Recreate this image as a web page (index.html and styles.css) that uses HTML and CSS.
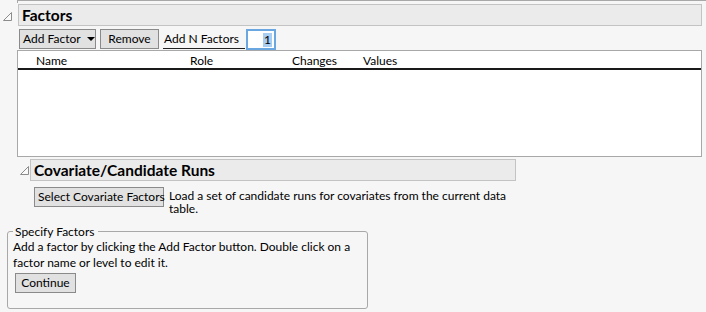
FILE: index.html
```html
<!DOCTYPE html>
<html>
<head>
<meta charset="utf-8">
<link rel="stylesheet" href="styles.css">
</head>
<body>
<div class="topline"></div>

<section class="outline outline-factors">
  <div class="disclosure">
    <svg width="10" height="9" viewBox="0 0 10 9"><path d="M0.5 8.5 L8.5 0.5 L8.5 8.5 Z" fill="#fafafa" stroke="#8c8c8c" stroke-width="1"/></svg>
  </div>
  <div class="outline-body">
    <div class="outline-header">Factors</div>
    <div class="toolbar">
      <button class="btn btn-menu">Add Factor <span class="caret"></span></button>
      <button class="btn">Remove</button>
      <span class="nlabel">Add N Factors</span>
      <span class="ninput"><span class="sel">1</span></span>
    </div>
    <div class="table">
      <div class="thead">
        <span class="col col-name">Name</span>
        <span class="col col-role">Role</span>
        <span class="col col-changes">Changes</span>
        <span class="col col-values">Values</span>
      </div>
    </div>
  </div>
</section>

<section class="outline outline-cov">
  <div class="disclosure">
    <svg width="10" height="9" viewBox="0 0 10 9"><path d="M0.5 8.5 L8.5 0.5 L8.5 8.5 Z" fill="#fafafa" stroke="#8c8c8c" stroke-width="1"/></svg>
  </div>
  <div class="outline-body">
    <div class="outline-header">Covariate/Candidate Runs</div>
    <div class="cov-row">
      <button class="btn">Select Covariate Factors</button>
      <p class="cov-text">Load a set of candidate runs for covariates from the current data table.</p>
    </div>
  </div>
</section>

<fieldset class="group">
  <legend>Specify Factors</legend>
  <p class="group-text">Add a factor by clicking the Add Factor button. Double click on a factor name or level to edit it.</p>
  <button class="btn">Continue</button>
</fieldset>
</body>
</html>
```

FILE: styles.css
```css
html, body {
  margin: 0;
  padding: 0;
  background: #f6f6f6;
}
body {
  font-family: Lato, "Liberation Sans", sans-serif;
  font-size: 12px;
  color: #000;
  width: 706px;
  height: 312px;
  overflow: hidden;
}
.topline {
  height: 2px;
  margin-left: 17px;
  border-top: 1px solid #a8a8a8;
  border-left: 1px solid #a8a8a8;
}
.outline {
  display: flex;
  align-items: flex-start;
}
.disclosure {
  display: flex;
  padding-top: 8px;
}
.outline-factors {
  margin-top: 1px;
}
.outline-factors .disclosure {
  width: 18px;
  box-sizing: border-box;
  justify-content: flex-start;
  padding-left: 3px;
}
.outline-factors .outline-body {
  width: 684px;
}
.outline-header {
  height: 20px;
  background: #ebebeb;
  border: 1px solid #c3c3c3;
  font-weight: bold;
  font-size: 15.5px;
  line-height: 20px;
  padding-left: 3px;
  white-space: nowrap;
}
.toolbar {
  display: flex;
  align-items: flex-start;
  margin-top: 3px;
  margin-left: 1px;
  height: 20px;
}
.btn {
  font-family: inherit;
  font-size: 12px;
  font-weight: normal;
  white-space: nowrap;
  height: 20px;
  line-height: 16px;
  padding: 0 5px;
  background: #e1e1e1;
  border: 1px solid #8a8a8a;
  border-radius: 0;
  color: #000;
  margin: 0;
}
.btn-menu {
  display: flex;
  align-items: center;
  gap: 6px;
  width: 77px;
  padding: 0 3px;
}
.caret {
  width: 0;
  height: 0;
  border-left: 4px solid transparent;
  border-right: 4px solid transparent;
  border-top: 4px solid #000;
}
.toolbar .btn + .btn {
  margin-left: 4px;
  width: 59px;
}
.nlabel {
  margin-left: 4px;
  width: 82px;
  height: 20px;
  line-height: 19px;
  border-bottom: 1px solid #222;
  box-sizing: border-box;
  padding-left: 1px;
  white-space: nowrap;
}
.ninput {
  margin-left: 1px;
  width: 30px;
  height: 21px;
  box-sizing: border-box;
  border: 2px solid #6aa6df;
  background: #fff;
  display: flex;
  justify-content: flex-end;
  align-items: center;
  padding-right: 2px;
}
.sel {
  background: #a8cdf0;
  padding: 0 1px;
  line-height: 14px;
}
.table {
  margin-top: 1px;
  margin-left: -1px;
  height: 105px;
  background: #fff;
  border: 1px solid #a8a8a8;
}
.thead {
  position: relative;
  height: 17px;
  border-bottom: 2px solid #1a1a1a;
  line-height: 19px;
}
.col {
  position: absolute;
  top: 0;
}
.col-name { left: 18px; }
.col-role { left: 172px; }
.col-changes { left: 274px; }
.col-values { left: 345px; }

.outline-cov {
  margin-top: 2px;
  margin-left: 17px;
}
.outline-cov .disclosure {
  width: 13px;
  justify-content: flex-start;
  padding-left: 3px;
  box-sizing: border-box;
  padding-top: 7px;
}
.outline-cov .outline-body {
  width: 486px;
}
.cov-row {
  display: flex;
  align-items: flex-start;
  margin-top: 6px;
  margin-left: 4px;
  width: 480px;
}
.cov-row .btn {
  flex: none;
  width: 130px;
  padding: 0 3px;
}
.cov-text {
  margin: 2px 0 0 5px;
  line-height: 13px;
  width: 340px;
}
.group {
  margin: 10px 0 0 7px;
  padding: 0 5px 10px 5px;
  width: 361px;
  height: 84px;
  box-sizing: border-box;
  border: 1px solid #a8a8a8;
  border-radius: 3px;
}
.group legend {
  padding: 0 4px 0 2px;
  margin-left: 0;
  line-height: 13px;
}
.group-text {
  margin: 1px 0 0 0;
  line-height: 16px;
}
.group .btn {
  margin-top: 2px;
  margin-left: 2px;
  width: 61px;
}
```
